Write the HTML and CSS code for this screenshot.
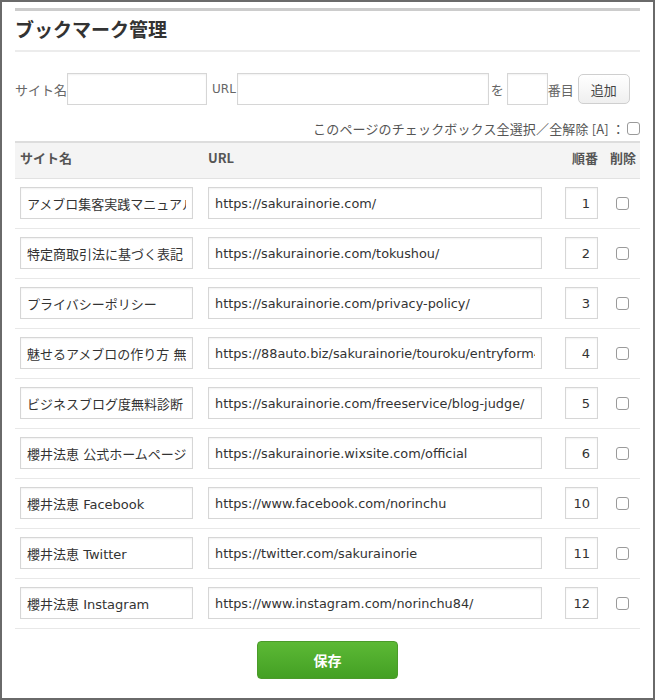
FILE: index.html
```html
<!DOCTYPE html>
<html lang="ja">
<head>
<meta charset="utf-8">
<title>ブックマーク管理</title>
<link rel="stylesheet" href="styles.css">
</head>
<body>
<div class="frame">
  <div class="panel">
    <h1 class="title">ブックマーク管理</h1>

    <div class="add-row">
      <span class="lbl">サイト名</span>
      <input class="field f-name" type="text">
      <span class="lbl lbl-url">URL</span>
      <input class="field f-url" type="text">
      <span class="lbl lbl-wo">を</span>
      <input class="field f-num" type="text">
      <span class="lbl">番目</span>
      <button class="btn-add" type="button">追加</button>
    </div>

    <div class="checkall">
      <span>このページのチェックボックス全選択／全解除 [A] ：</span>
      <input class="chk" type="checkbox">
    </div>

    <div class="table">
      <div class="thead">
        <div class="th">サイト名</div>
        <div class="th">URL</div>
        <div class="th th-num">順番</div>
        <div class="th th-del">削除</div>
      </div>

      <div class="tr">
        <div class="td"><input class="cell c-name" type="text" value="アメブロ集客実践マニュアル"></div>
        <div class="td"><input class="cell c-url" type="text" value="https://sakurainorie.com/"></div>
        <div class="td"><input class="cell c-num" type="text" value="1"></div>
        <div class="td td-del"><input class="chk" type="checkbox"></div>
      </div>
      <div class="tr">
        <div class="td"><input class="cell c-name" type="text" value="特定商取引法に基づく表記"></div>
        <div class="td"><input class="cell c-url" type="text" value="https://sakurainorie.com/tokushou/"></div>
        <div class="td"><input class="cell c-num" type="text" value="2"></div>
        <div class="td td-del"><input class="chk" type="checkbox"></div>
      </div>
      <div class="tr">
        <div class="td"><input class="cell c-name" type="text" value="プライバシーポリシー"></div>
        <div class="td"><input class="cell c-url" type="text" value="https://sakurainorie.com/privacy-policy/"></div>
        <div class="td"><input class="cell c-num" type="text" value="3"></div>
        <div class="td td-del"><input class="chk" type="checkbox"></div>
      </div>
      <div class="tr">
        <div class="td"><input class="cell c-name" type="text" value="魅せるアメブロの作り方 無料講座"></div>
        <div class="td"><input class="cell c-url" type="text" value="https://88auto.biz/sakurainorie/touroku/entryform4.htm"></div>
        <div class="td"><input class="cell c-num" type="text" value="4"></div>
        <div class="td td-del"><input class="chk" type="checkbox"></div>
      </div>
      <div class="tr">
        <div class="td"><input class="cell c-name" type="text" value="ビジネスブログ度無料診断"></div>
        <div class="td"><input class="cell c-url" type="text" value="https://sakurainorie.com/freeservice/blog-judge/"></div>
        <div class="td"><input class="cell c-num" type="text" value="5"></div>
        <div class="td td-del"><input class="chk" type="checkbox"></div>
      </div>
      <div class="tr">
        <div class="td"><input class="cell c-name" type="text" value="櫻井法恵 公式ホームページ"></div>
        <div class="td"><input class="cell c-url" type="text" value="https://sakurainorie.wixsite.com/official"></div>
        <div class="td"><input class="cell c-num" type="text" value="6"></div>
        <div class="td td-del"><input class="chk" type="checkbox"></div>
      </div>
      <div class="tr">
        <div class="td"><input class="cell c-name" type="text" value="櫻井法恵 Facebook"></div>
        <div class="td"><input class="cell c-url" type="text" value="https://www.facebook.com/norinchu"></div>
        <div class="td"><input class="cell c-num" type="text" value="10"></div>
        <div class="td td-del"><input class="chk" type="checkbox"></div>
      </div>
      <div class="tr">
        <div class="td"><input class="cell c-name" type="text" value="櫻井法恵 Twitter"></div>
        <div class="td"><input class="cell c-url" type="text" value="https://twitter.com/sakurainorie"></div>
        <div class="td"><input class="cell c-num" type="text" value="11"></div>
        <div class="td td-del"><input class="chk" type="checkbox"></div>
      </div>
      <div class="tr">
        <div class="td"><input class="cell c-name" type="text" value="櫻井法恵 Instagram"></div>
        <div class="td"><input class="cell c-url" type="text" value="https://www.instagram.com/norinchu84/"></div>
        <div class="td"><input class="cell c-num" type="text" value="12"></div>
        <div class="td td-del"><input class="chk" type="checkbox"></div>
      </div>
    </div>

    <div class="save-row">
      <button class="btn-save" type="button">保存</button>
    </div>
  </div>
</div>
</body>
</html>
```

FILE: styles.css
```css
* { box-sizing: border-box; }

html, body {
  margin: 0;
  padding: 0;
  background: #ffffff;
}

body {
  font-family: "DejaVu Sans", "Noto Sans CJK JP", sans-serif;
  font-size: 13px;
  color: #333333;
}

.frame {
  width: 655px;
  height: 700px;
  border: 2px solid #6a6a6a;
  background: #ffffff;
  padding: 6px 13px 0 13px;
}

.panel {
  border-top: 3px solid #cccccc;
}

.title {
  margin: 0;
  font-family: "Noto Sans CJK JP", sans-serif;
  font-size: 19px;
  font-weight: bold;
  color: #333333;
  line-height: 35px;
  padding-bottom: 4px;
  border-bottom: 2px solid #ececec;
}

.add-row {
  display: flex;
  align-items: center;
  margin-top: 21px;
  height: 32px;
}

.lbl {
  font-family: "Noto Sans CJK JP", sans-serif;
  color: #666666;
  font-size: 13px;
  white-space: nowrap;
}

.lbl-url {
  font-family: "DejaVu Sans", sans-serif;
  margin-left: 5px;
  font-size: 12px;
}

.lbl-wo {
  margin-left: 2px;
  margin-right: 3px;
}

.field {
  height: 32px;
  border: 1px solid #d6d6d6;
  box-shadow: inset 0 1px 2px rgba(0, 0, 0, 0.06);
  background: #ffffff;
  margin: 0;
  padding: 0 6px;
  font: inherit;
  outline: none;
}

.f-name { width: 140px; }
.f-url { width: 252px; margin-left: 1px; }
.f-num { width: 41px; }

.btn-add {
  margin-left: 4px;
  width: 52px;
  height: 30px;
  border: 1px solid #cfcfcf;
  border-radius: 5px;
  background: linear-gradient(#ffffff, #efefef);
  font-family: "Noto Sans CJK JP", sans-serif;
  font-size: 13px;
  color: #444444;
  padding: 0;
}

.checkall {
  display: flex;
  justify-content: flex-end;
  align-items: center;
  height: 26px;
  margin-top: 10px;
  font-family: "Noto Sans CJK JP", sans-serif;
  color: #555555;
  font-size: 13px;
  letter-spacing: 0.15px;
}

.checkall .chk {
  margin-left: 2px;
}

.chk {
  appearance: none;
  -webkit-appearance: none;
  width: 13px;
  height: 13px;
  margin: 0;
  border: 1px solid #9a9a9a;
  border-radius: 3px;
  background: #ffffff;
}

.table {
  border-top: 2px solid #dddddd;
}

.thead,
.tr {
  display: grid;
  grid-template-columns: 188px 357px 44px 36px;
}

.thead {
  background: #f4f4f4;
  height: 36px;
  border-bottom: 1px solid #e2e2e2;
}

.th {
  font-family: "Noto Sans CJK JP", sans-serif;
  font-weight: bold;
  color: #555555;
  font-size: 13px;
  line-height: 30px;
  padding-left: 5px;
}

.th-num {
  text-align: right;
  padding-left: 0;
  padding-right: 6px;
}

.th-del {
  padding-left: 6px;
}

.tr {
  padding: 8px 0 9px 0;
  border-bottom: 1px solid #e8e8e8;
}

.td {
  display: flex;
  align-items: center;
  padding-left: 5px;
}

.td-del {
  padding-left: 0;
  justify-content: center;
}

.cell {
  height: 32px;
  border: 1px solid #d6d6d6;
  box-shadow: inset 0 1px 2px rgba(0, 0, 0, 0.06);
  background: #ffffff;
  margin: 0;
  padding: 0 6px;
  font-family: "DejaVu Sans", "Noto Sans CJK JP", sans-serif;
  font-size: 13px;
  color: #333333;
  outline: none;
}

.c-name { width: 173px; }
.c-url { width: 334px; font-size: 12.85px; }
.c-num { width: 33px; text-align: right; padding-right: 7px; }

.save-row {
  display: flex;
  justify-content: center;
  margin-top: 12px;
}

.btn-save {
  width: 141px;
  height: 38px;
  border: 1px solid #4b9b2a;
  border-radius: 4px;
  background: linear-gradient(#5cb935, #44a024);
  color: #ffffff;
  font-family: "Noto Sans CJK JP", sans-serif;
  font-weight: bold;
  font-size: 14px;
  padding: 0;
}
```
